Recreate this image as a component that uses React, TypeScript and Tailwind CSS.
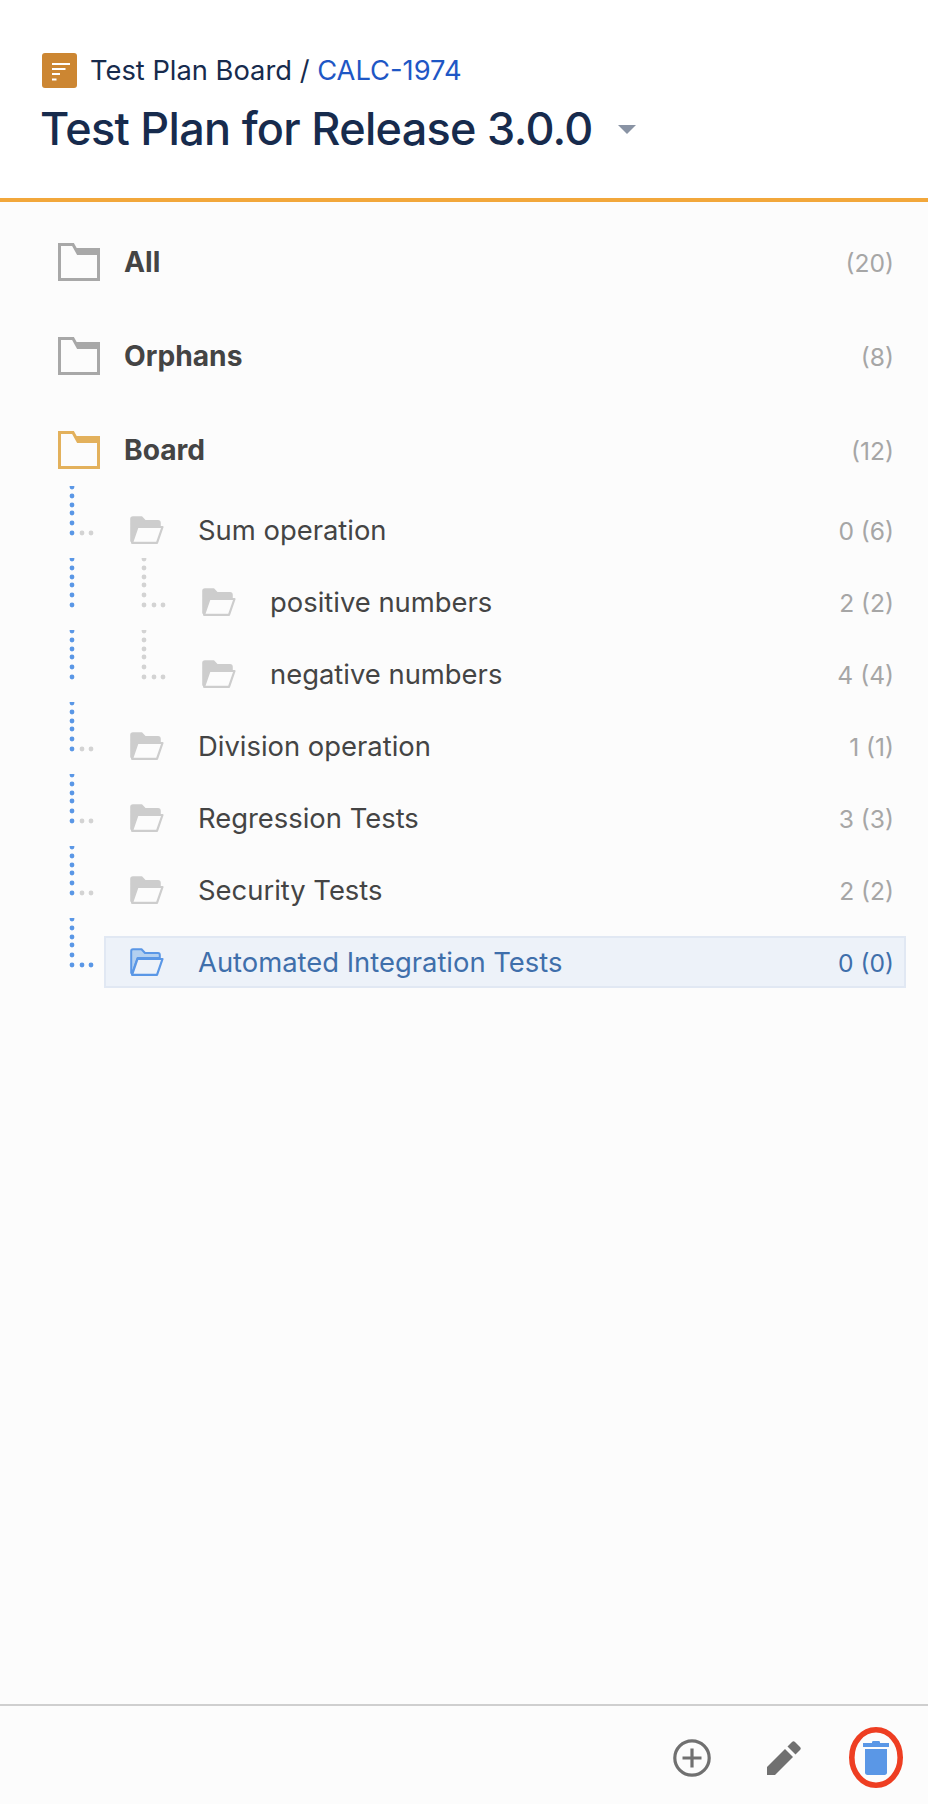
const FONT = "font-['Inter','Liberation_Sans',sans-serif]";

function TopFolder({ color }: { color: string }) {
  return (
    <svg width="42" height="38" viewBox="0 0 42 38" className="shrink-0">
      <path d="M1.5 1.5H15L20 10.5H40.5V36.5H1.5Z" fill="none" stroke={color} strokeWidth="3" />
      <path d="M16 5H42V12H21Z" fill={color} />
    </svg>
  );
}

function OpenFolder({ blue }: { blue?: boolean }) {
  const stroke = blue ? "#5a97e6" : "#cdcdcd";
  const back = blue ? "#b3d0f0" : "#cdcdcd";
  return (
    <svg width="34" height="28" viewBox="0 0 34 28" className="shrink-0">
      <path d="M1.2 25V3C1.2 2 2 1.2 3 1.2H11.5L15 5H28C29 5 29.8 5.8 29.8 7V10H7.5L2 26Z" fill={back} stroke={blue ? stroke : back} strokeWidth="2" strokeLinejoin="round" />
      <path d="M7.5 11H32.5L27 26.8H2Z" fill={blue ? "#edf2f9" : "#fcfcfc"} stroke={stroke} strokeWidth="2.2" strokeLinejoin="round" />
    </svg>
  );
}

const BLUE_YS = [1, 10, 19, 27, 37, 47];

function Connector({ level, selected }: { level: number; selected?: boolean }) {
  const w = level === 1 ? 36 : 108;
  return (
    <svg width={w} height="50" viewBox={`0 0 ${w} 50`} className="shrink-0 self-start -mt-[16px]">
      {BLUE_YS.map((y) => (
        <circle key={y} cx="4" cy={y} r="2.4" fill="#5a97e6" />
      ))}
      {level === 1 ? (
        <>
          <circle cx="14" cy="47" r="2.4" fill={selected ? "#5a97e6" : "#d3d3d3"} />
          <circle cx="23" cy="47" r="2.4" fill={selected ? "#5a97e6" : "#d3d3d3"} />
        </>
      ) : (
        <>
          {BLUE_YS.map((y) => (
            <circle key={y} cx="76" cy={y} r="2.4" fill="#d3d3d3" />
          ))}
          <circle cx="86" cy="47" r="2.4" fill="#d3d3d3" />
          <circle cx="95" cy="47" r="2.4" fill="#d3d3d3" />
        </>
      )}
    </svg>
  );
}

function TopRow({ label, count, color }: { label: string; count: string; color: string }) {
  return (
    <div className="flex h-[72px] items-center gap-[24px] pr-[34px]">
      <TopFolder color={color} />
      <span className="flex-1 text-[28.2px] font-bold text-[#444444]">{label}</span>
      <span className="mt-[3px] text-[24.6px] text-[#a6a6a6]">{count}</span>
    </div>
  );
}

function TreeRow({ label, count, level = 1, selected }: { label: string; count: string; level?: number; selected?: boolean }) {
  return (
    <div className="flex h-[72px] items-center pt-[16px] pl-[10px] pr-[22px]">
      <Connector level={level} selected={selected} />
      <div
        className={
          selected
            ? "flex h-[52px] flex-1 items-center gap-[34px] border-2 border-[#e1e8f3] bg-[#edf2f9] pl-[24px] pr-[10px]"
            : "flex h-[52px] flex-1 items-center gap-[34px] border-2 border-transparent pl-[24px] pr-[10px]"
        }
      >
        <OpenFolder blue={selected} />
        <span className={selected ? "mt-[2px] flex-1 text-[27.4px] text-[#3f6fab]" : "mt-[2px] flex-1 text-[27.4px] text-[#444444]"}>{label}</span>
        <span className={selected ? "mt-[3px] text-[24.6px] text-[#3f6fab]" : "mt-[3px] text-[24.6px] text-[#a6a6a6]"}>{count}</span>
      </div>
    </div>
  );
}

export default function App() {
  return (
    <div className={`flex h-[1804px] w-[928px] flex-col bg-[#fcfcfc] ${FONT}`}>
      <header className="h-[202px] shrink-0 border-b-4 border-[#f2a73b] bg-white pl-[42px] pt-[53px]">
        <div className="flex h-[35px] items-center gap-[13px] text-[27.3px] text-[#172b4d]">
          <svg width="35" height="35" viewBox="0 0 35 35" className="shrink-0">
            <rect width="35" height="35" rx="3" fill="#cc8632" />
            <path d="M10 11H28M10 16H23.5M10 21H18M10 26.5H14.5" stroke="#fff" strokeWidth="2.2" />
          </svg>
          <div className="pt-[2px]">
            Test Plan Board / <span className="text-[#1e57c5]">CALC-1974</span>
          </div>
        </div>
        <div className="mt-[11px] flex items-center gap-[25px] -ml-[2px]">
          <h1 className="text-[45px] leading-[60px] font-medium tracking-[-0.7px] text-[#172b4d]">Test Plan for Release 3.0.0</h1>
          <svg width="18" height="9" viewBox="0 0 18 9" className="shrink-0">
            <path d="M0 0H18L9 9Z" fill="#8993a4" />
          </svg>
        </div>
      </header>

      <main className="flex-1 pt-[24px]">
        <div className="pl-[58px]">
          <TopRow label="All" count="(20)" color="#a8a8a8" />
          <div className="mt-[22px]">
            <TopRow label="Orphans" count="(8)" color="#a8a8a8" />
          </div>
          <div className="mt-[22px]">
            <TopRow label="Board" count="(12)" color="#e3b15c" />
          </div>
        </div>
        <div className="pl-[58px]">
          <TreeRow label="Sum operation" count="0 (6)" />
          <TreeRow label="positive numbers" count="2 (2)" level={2} />
          <TreeRow label="negative numbers" count="4 (4)" level={2} />
          <TreeRow label="Division operation" count="1 (1)" />
          <TreeRow label="Regression Tests" count="3 (3)" />
          <TreeRow label="Security Tests" count="2 (2)" />
          <TreeRow label="Automated Integration Tests" count="0 (0)" selected />
        </div>
      </main>

      <footer className="flex h-[100px] shrink-0 items-center justify-end gap-[48px] border-t-2 border-[#cfcfcf] pr-[25px] pt-[5px]">
        <div className="flex items-center gap-[56px]">
          <svg width="38" height="38" viewBox="0 0 38 38">
            <circle cx="19" cy="19" r="17.2" fill="none" stroke="#707070" strokeWidth="3.2" />
            <path d="M19 9.5V28.5M9.5 19H28.5" stroke="#707070" strokeWidth="3.2" />
          </svg>
          <svg width="34" height="34" viewBox="0 0 34 34">
            <path d="M0 26V34H8L26 16L18 8Z" fill="#707070" />
            <path d="M20.5 5.5L28.5 13.5L33 9C34 8 34 7 33 6L28 1C27 0 26 0 25 1Z" fill="#707070" />
          </svg>
        </div>
        <svg width="54" height="61" viewBox="0 0 54 61">
          <ellipse cx="27" cy="30.5" rx="24.2" ry="27.7" fill="none" stroke="#ee3e22" strokeWidth="5.6" />
          <path d="M14 16H40V20H14Z" fill="#5a97e6" />
          <path d="M23 15C23 14 24 14 25 14H29C30 14 31 14 31 15V17H23Z" fill="#5a97e6" />
          <path d="M16 22H38V45.5C38 47 37 48 35.5 48H18.5C17 48 16 47 16 45.5Z" fill="#5a97e6" />
        </svg>
      </footer>
    </div>
  );
}
